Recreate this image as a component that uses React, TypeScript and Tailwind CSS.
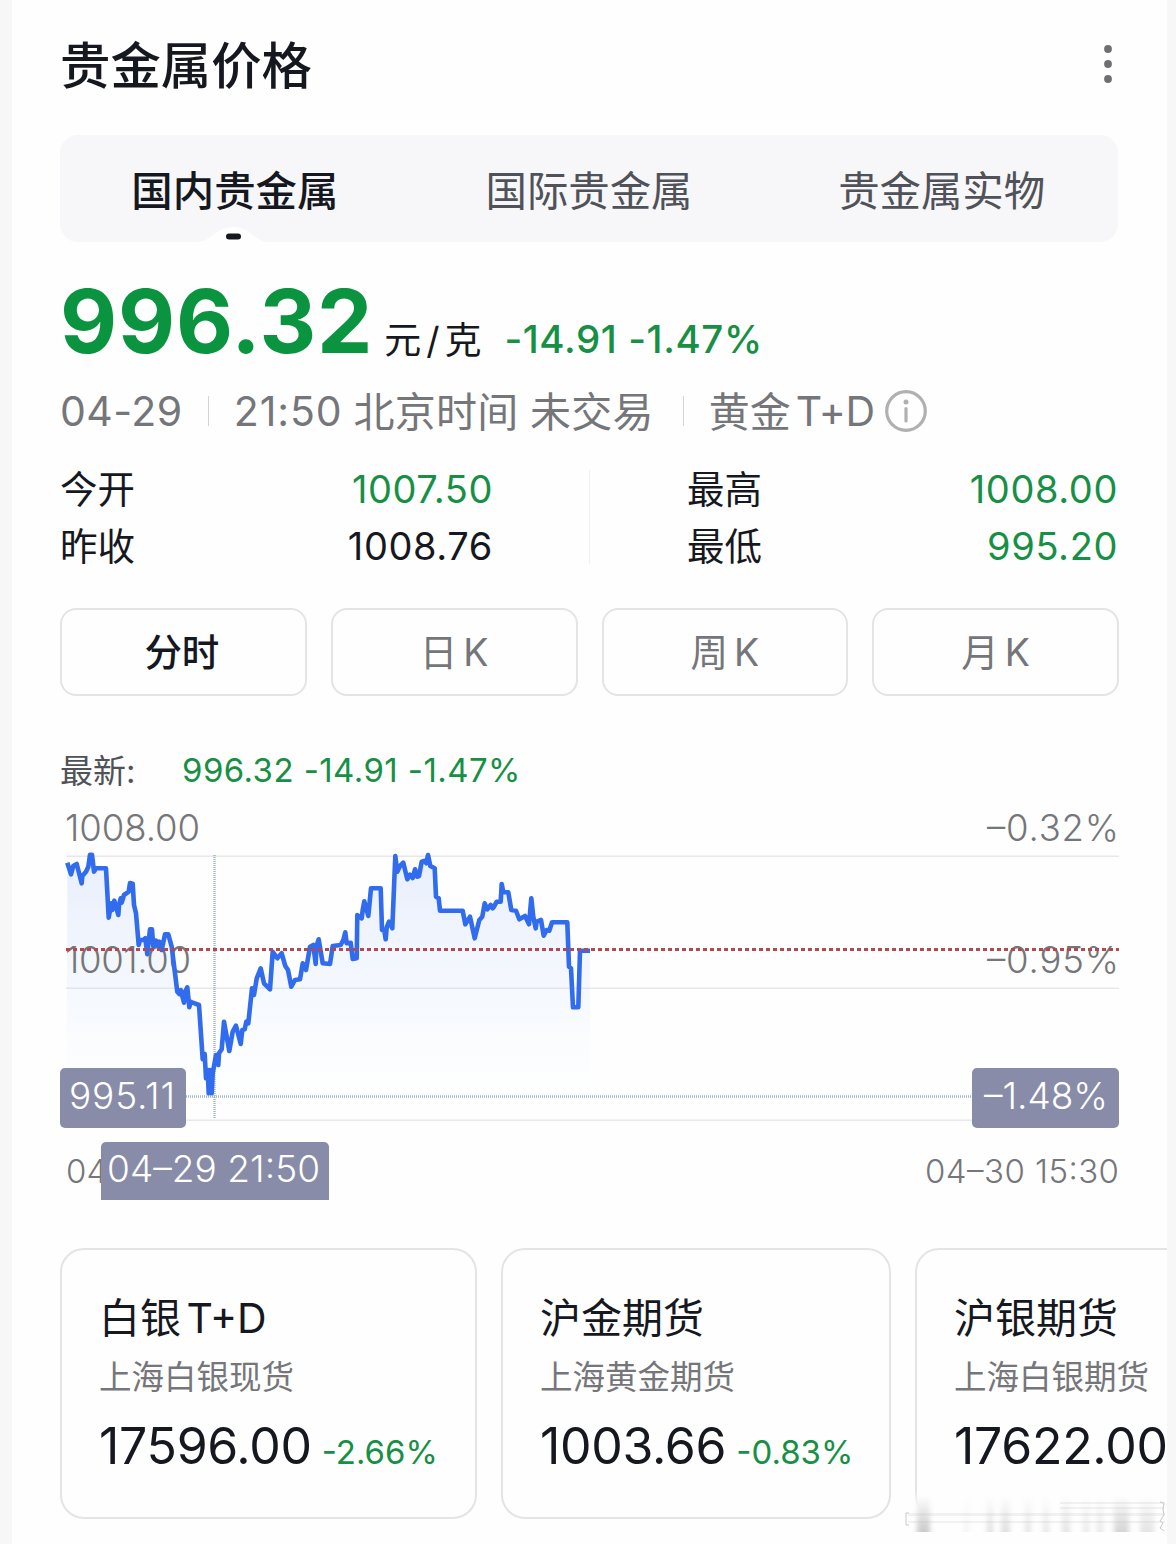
import { clsx } from "clsx";

const tabs = ["国内贵金属", "国际贵金属", "贵金属实物"];

const periods = ["分时", "日 K", "周 K", "月 K"];

const cards = [
  { name: "白银 T+D", desc: "上海白银现货", price: "17596.00", change: "-2.66%", width: "w-[417px]" },
  { name: "沪金期货", desc: "上海黄金期货", price: "1003.66", change: "-0.83%", width: "w-[390px]" },
  { name: "沪银期货", desc: "上海白银期货", price: "17622.00", width: "w-[417px]" },
];

// price samples, stored at 3x so the small ticks survive rounding
const samples: [number, number][] = [
  [52, 68], [63, 103], [70, 78], [80, 72], [95, 130], [97, 108], [108, 95], [115, 80], [120, 44], [126, 44],
  [132, 95], [138, 85], [168, 85], [176, 233], [184, 190], [187, 210], [193, 182], [205, 225], [207, 195],
  [212, 175], [215, 188], [222, 165], [236, 155], [240, 129], [248, 131], [252, 195], [258, 220], [266, 315],
  [270, 300], [280, 300], [286, 295], [292, 343], [300, 268], [306, 268], [310, 320], [318, 302], [325, 318],
  [328, 305], [335, 330], [345, 283], [355, 283], [365, 320], [382, 455], [388, 462], [392, 450], [402, 488],
  [405, 455], [412, 442], [418, 502], [422, 485], [428, 488], [447, 495], [458, 658], [464, 642], [468, 715],
  [473, 690], [476, 760], [480, 690], [485, 760], [488, 700], [498, 645], [505, 675], [507, 640], [515, 628],
  [522, 545], [538, 633], [548, 575], [558, 557], [572, 612], [577, 570], [584, 568], [589, 545], [595, 550],
  [606, 445], [612, 465], [620, 415], [632, 385], [642, 430], [660, 448], [668, 335], [682, 355], [695, 340],
  [706, 378], [714, 390], [724, 440], [735, 420], [750, 418], [758, 370], [768, 390], [780, 320], [790, 315],
  [797, 372], [799, 320], [806, 298], [818, 370], [840, 372], [848, 318], [872, 315], [880, 300], [886, 277],
  [890, 310], [902, 308], [908, 357], [920, 355], [922, 225], [935, 235], [938, 210], [943, 184], [955, 228],
  [963, 145], [992, 145], [996, 270], [1003, 272], [1007, 298], [1010, 262], [1017, 245], [1027, 265],
  [1036, 48], [1042, 95], [1050, 78], [1060, 68], [1072, 118], [1080, 104], [1088, 114], [1095, 88],
  [1102, 110], [1107, 108], [1115, 65], [1125, 62], [1129, 70], [1134, 45], [1141, 78], [1154, 85],
  [1158, 170], [1166, 175], [1170, 212], [1238, 212], [1246, 253], [1260, 230], [1274, 295], [1288, 240],
  [1297, 230], [1304, 190], [1312, 208], [1322, 195], [1328, 205], [1332, 200], [1340, 185], [1352, 185],
  [1355, 132], [1360, 157], [1375, 157], [1384, 210], [1398, 212], [1408, 238], [1425, 228], [1437, 253],
  [1444, 175], [1450, 230], [1457, 265], [1460, 245], [1473, 240], [1481, 287], [1490, 270], [1498, 272],
  [1506, 247], [1552, 247], [1557, 380], [1563, 385], [1569, 502], [1585, 502], [1590, 332], [1620, 332],
];

const line = samples.map(([x, y]) => `${(50 + x / 3).toFixed(1)},${(840 + y / 3).toFixed(1)}`).join(" ");

// x, width, opacity of each streak in the smudge
const streaks = [
  [917, 13, 1], [964, 5, 0.2], [987, 6, 0.6], [1001, 9, 0.6], [1025, 6, 0.5], [1043, 6, 0.45], [1062, 8, 0.5],
  [1083, 6, 0.4], [1097, 6, 0.45], [1114, 15, 0.8], [1140, 14, 0.5],
];

const MoreIcon = () => (
  <svg width="10" height="40" viewBox="0 0 10 40" fill="#6f6f73">
    <circle cx="5" cy="5" r="3.9" />
    <circle cx="5" cy="20" r="3.9" />
    <circle cx="5" cy="35" r="3.9" />
  </svg>
);

const InfoIcon = () => (
  <svg width="42" height="42" viewBox="0 0 42 42" fill="none" stroke="#b0b0b2">
    <circle cx="21" cy="21" r="19.3" strokeWidth="3.2" />
    <circle cx="21" cy="12" r="2.5" fill="#b0b0b2" stroke="none" />
    <path d="M21 18.5v12.5" strokeWidth="3.2" strokeLinecap="round" />
  </svg>
);

const Separator = () => <span className="h-[30px] w-px bg-[#d4d4d6]" />;

const Stat = ({ label, value, down }: { label: string; value: string; down?: boolean }) => (
  <div className="flex h-[57px] items-center justify-between">
    <span className="pt-[3px] text-[37.5px] text-[#16181f]">{label}</span>
    <span className={clsx("text-[38px] tracking-[0.6px]", down ? "text-[#179045]" : "text-[#16181f]")}>
      {value}
    </span>
  </div>
);

const Chart = () => (
  <svg className="mt-[10px] block" width="1059" height="410" viewBox="60 800 1059 410">
    <defs>
      <linearGradient id="area" x1="0" y1="0" x2="0" y2="1">
        <stop offset="0" stopColor="#316bee" stopOpacity="0.11" />
        <stop offset="0.6" stopColor="#4a8bf5" stopOpacity="0.045" />
        <stop offset="1" stopColor="#90e8ff" stopOpacity="0" />
      </linearGradient>
    </defs>

    {/* Grid */}
    <g stroke="#e8e8ea" strokeWidth="1.5">
      <path d="M66 856.3H1119M66 988.3H1119M66 1120.3H1119" />
    </g>
    <polygon points={`66.5,1097 ${line} 590,1097`} fill="url(#area)" />

    {/* Axis labels */}
    <g fill="#75767a" fontSize="36.5" fontWeight="350">
      <text x="65" y="841" textLength="135">1008.00</text>
      <text x="65" y="973" textLength="126">1001.00</text>
      <text x="987" y="841" textLength="132">–0.32%</text>
      <text x="987" y="973" textLength="132">–0.95%</text>
    </g>
    <g fill="#75767a" fontSize="33" fontWeight="350">
      <text x="66" y="1183">04</text>
      <text x="925" y="1183" textLength="194">04–30 15:30</text>
    </g>

    {/* Crosshair */}
    <g stroke="#9fb6cc" strokeWidth="2.4" strokeDasharray="1 1">
      <path d="M214.5 855V1118" />
      <path d="M186 1096.5H972" />
    </g>

    <polyline points={line} fill="none" stroke="#316bee" strokeWidth="4.6" strokeLinejoin="round" />
    <path d="M66 949.5H1119" stroke="#b5474f" strokeWidth="3" strokeDasharray="4 3" />

    {/* Crosshair badges */}
    <g fill="#888ca8">
      <rect x="60" y="1068" width="126" height="60" rx="5" />
      <rect x="972" y="1068" width="147" height="60" rx="5" />
      <path d="M101 1200V1147a5 5 0 0 1 5-5H324a5 5 0 0 1 5 5V1200z" />
    </g>
    <g fill="#fff" fontSize="37" fontWeight="300">
      <text x="69" y="1108.5" textLength="106">995.11</text>
      <text x="984" y="1108.5" textLength="124">–1.48%</text>
      <text x="107" y="1181.5" textLength="213">04–29 21:50</text>
    </g>
  </svg>
);

const App = () => {
  return (
    <div className="h-[1544px] w-[1176px] overflow-hidden bg-[#f7f7f8] pl-3 pr-[9px] font-['Inter','Noto_Sans_CJK_SC',sans-serif] leading-none">
      <main className="relative h-full overflow-hidden bg-[#fefefe] pl-12 pr-12">
        {/* Header */}
        <header className="flex h-[128px] items-center justify-between pr-[6px]">
          <h1 className="pt-1 text-[50.4px] font-medium text-[#16181f]">贵金属价格</h1>
          <MoreIcon />
        </header>

        {/* Tabs */}
        <nav className="relative mt-[7px] grid h-[106.5px] w-[1058px] grid-cols-3 items-center rounded-[18px] bg-[#f7f7f9] pt-[6px]">
          {tabs.map((tab, i) => (
            <span
              key={tab}
              className={clsx(
                "text-center text-[41.4px]",
                i === 0 ? "-ml-[3px] font-medium text-[#16181f]" : "text-[#50525a]",
              )}
            >
              {tab}
            </span>
          ))}
          <svg className="absolute bottom-0 left-[138px]" width="70" height="16" viewBox="0 0 70 16">
            <path d="M0 16C12 16 18 1 35 1S58 16 70 16z" fill="#fefefe" />
            <rect x="28" y="7.5" width="15" height="6" rx="3" fill="#16181f" />
          </svg>
        </nav>

        {/* Price */}
        <section className="mt-[31px] flex h-24 items-baseline whitespace-nowrap leading-[96px]">
          <span className="text-[88px] font-bold tracking-[0.8px] text-[#0a943f]">996.32</span>
          <span className="relative top-px ml-[11px] text-[37px] text-[#16181f] [word-spacing:-5.5px]">元 / 克</span>
          <span className="ml-[23px] text-[38.5px] font-medium tracking-[0.6px] text-[#179045]">-14.91 -1.47%</span>
        </section>

        <section className="mt-[18.5px] flex h-12 items-center whitespace-nowrap text-[41px] text-[#75767a]">
          <span className="tracking-[0.5px]">04-29</span>
          <span className="ml-[25px] flex"><Separator /></span>
          <span className="ml-[25px] tracking-[0.9px]">21:50</span>
          <span className="ml-[11px] pt-[3px] tracking-[0.2px]">北京时间 未交易</span>
          <span className="ml-[29px] flex"><Separator /></span>
          <span className="ml-[25px] pt-[3px]">黄金</span>
          <span className="ml-[5px] mr-[10px] tracking-[-0.4px]">T+D</span>
          <InfoIcon />
        </section>

        <section className="mt-[25px] flex w-[1058px] items-center">
          <div className="w-[433px]">
            <Stat label="今开" value="1007.50" down />
            <Stat label="昨收" value="1008.76" />
          </div>
          <div className="ml-[96px] mr-[97px] h-[94px] w-px bg-[#efeff0]" />
          <div className="flex-1">
            <Stat label="最高" value="1008.00" down />
            <Stat label="最低" value="995.20" down />
          </div>
        </section>

        {/* Period switch */}
        <div className="mt-[34px] grid w-[1059px] grid-cols-4 gap-6">
          {periods.map((period, i) => (
            <button
              key={period}
              className={clsx(
                "h-[88px] rounded-2xl border-2 border-[#e4e4e6] pt-[2px] text-[37.5px] [word-spacing:-4.5px]",
                i === 0 ? "pr-[3px] font-medium text-[#16181f]" : "text-[#75767a]",
              )}
            >
              {period}
            </button>
          ))}
        </div>

        <div className="mt-[54px] flex h-10 items-center whitespace-nowrap">
          <span className="w-[122px] pt-[2px] text-[33px] text-[#50525a]">最新:</span>
          <span className="text-[33px] tracking-[0.42px] text-[#179045]">996.32 -14.91 -1.47%</span>
        </div>

        <Chart />

        {/* Related products */}
        <div className="mt-[38px] flex gap-6">
          {cards.map((card) => (
            <div
              key={card.name}
              className={clsx("h-[271px] shrink-0 rounded-[24px] border-2 border-[#e4e4e6] pl-[37px]", card.width)}
            >
              <h2 className="mt-[43px] text-[41px] leading-[50px] text-[#16181f] [word-spacing:-6px]">{card.name}</h2>
              <p className="mt-[14px] text-[32.5px] leading-[42px] text-[#75767a]">{card.desc}</p>
              <div className="mt-[17px] flex items-baseline whitespace-nowrap leading-[60px]">
                <span className="text-[50px] tracking-[-0.3px] text-[#16181f]">{card.price}</span>
                {card.change && <span className="ml-[10px] text-[33px] text-[#179045]">{card.change}</span>}
              </div>
            </div>
          ))}
        </div>

        {/* Smudge over the last card */}
        <svg className="absolute bottom-0 right-0" width="265" height="60" viewBox="902 1484 265 60">
          <defs>
            <linearGradient id="fade" x1="0" y1="0" x2="0" y2="1">
              <stop offset="0" stopColor="#fefefe" stopOpacity="0" />
              <stop offset="0.35" stopColor="#fefefe" />
            </linearGradient>
            <linearGradient id="streak" x1="0" y1="0" x2="0" y2="1">
              <stop offset="0" stopColor="#bdbdbd" stopOpacity="0" />
              <stop offset="1" stopColor="#bdbdbd" />
            </linearGradient>
            <filter id="soft" x="-100%" width="300%" y="0" height="100%">
              <feGaussianBlur stdDeviation="2.5 0" />
            </filter>
          </defs>
          <rect x="902" y="1490" width="265" height="54" fill="url(#fade)" />
          <g fill="#f1f1f1">
            <rect x="908" y="1513" width="257" height="3" />
            <rect x="908" y="1521" width="257" height="2" />
            <rect x="1060" y="1502" width="104" height="2" />
            <rect x="1060" y="1507" width="104" height="2" />
          </g>
          {streaks.map(([x, width, opacity]) => (
            <rect
              key={x}
              x={x}
              y="1496"
              width={width}
              height="36"
              opacity={opacity * 0.8}
              fill="url(#streak)"
              filter="url(#soft)"
            />
          ))}
          <path
            d="M909 1513h-3v12h3M1160 1502l4 1-1 6 1 6-4 6 3 2-3 5 4 3"
            fill="none"
            stroke="#c9c9c9"
            strokeWidth="1"
          />
        </svg>
      </main>
    </div>
  );
};

export default App;
